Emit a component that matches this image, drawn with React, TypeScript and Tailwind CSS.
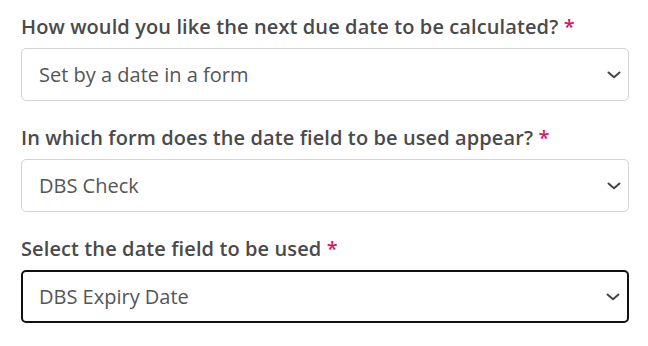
import React from "react";

function Chevron() {
  return (
    <svg width="14" height="8" viewBox="0 0 14 8" fill="none" className="absolute right-[7px] top-1/2 -translate-y-1/2 pointer-events-none">
      <path d="M1.5 1.5L7 6.2L12.5 1.5" stroke="#444" strokeWidth="2" strokeLinecap="round" strokeLinejoin="round" />
    </svg>
  );
}

function Field({ label, value, focused }: { label: string; value: string; focused?: boolean }) {
  return (
    <div className="flex flex-col gap-[8px]">
      <div className="text-[20px] leading-[27px] font-semibold tracking-[0.1px] text-[#4a4a4a]">
        {label} <span className="text-[#d6156b]">*</span>
      </div>
      <div
        className={
          "relative h-[53px] rounded-[5px] bg-white flex items-center " +
          (focused ? "border-2 border-[#111] pl-[16px]" : "border border-[#d4d4d4] pl-[17px]")
        }
      >
        <span className="text-[20px] text-[#555]">{value}</span>
        <Chevron />
      </div>
    </div>
  );
}

export default function App() {
  return (
    <div className="w-[648px] h-[346px] bg-white px-[21px] pt-[13px]" style={{ fontFamily: '"Open Sans", sans-serif' }}>
      <div className="flex flex-col gap-[23px] w-[608px]">
        <Field label="How would you like the next due date to be calculated?" value="Set by a date in a form" />
        <Field label="In which form does the date field to be used appear?" value="DBS Check" />
        <Field label="Select the date field to be used" value="DBS Expiry Date" focused />
      </div>
    </div>
  );
}
